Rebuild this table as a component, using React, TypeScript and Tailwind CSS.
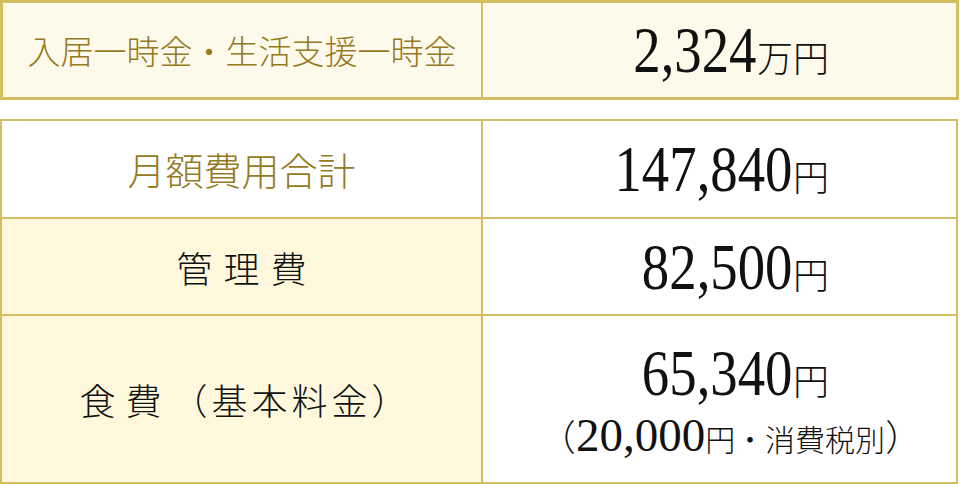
import React from "react";

// 入居一時金・月額費用の料金表（2 ブロック構成）

const BORDER = "border-[#d4be64]";
const GOLD = "text-[#957a1f]";
const SERIF = "font-['Liberation_Serif',serif]";

function Amount({ value, unit }: { value: string; unit: string }) {
  return (
    <span className="flex items-baseline text-[#111]">
      <span
        className={`inline-block origin-right scale-x-[0.83] ${SERIF} text-[66px] leading-none`}
      >
        {value}
      </span>
      <span className="text-[36px] font-light leading-none">{unit}</span>
    </span>
  );
}

function Row({
  label,
  children,
  labelBg,
  className,
}: {
  label: React.ReactNode;
  children: React.ReactNode;
  labelBg: string;
  className: string;
}) {
  return (
    <div className={`flex ${className}`}>
      <div
        className={`flex w-[479px] shrink-0 items-center justify-center ${labelBg}`}
      >
        {label}
      </div>
      <div
        className={`flex flex-1 items-center justify-end border-l-2 ${BORDER} bg-white pr-[127px]`}
      >
        {children}
      </div>
    </div>
  );
}

export default function App() {
  return (
    <div className="h-[484px] w-[960px] bg-white font-['Noto_Sans_CJK_JP',sans-serif] font-light">
      {/* 一時金 */}
      <div
        className={`flex h-[100px] w-[959px] border-[3px] ${BORDER} bg-[#fdf9eb]`}
      >
        <div
          className={`flex w-[478px] shrink-0 items-center justify-center text-[33px] leading-none ${GOLD}`}
        >
          入居一時金・生活支援一時金
        </div>
        <div
          className={`flex flex-1 items-center justify-end border-l-2 ${BORDER} pr-[127px]`}
        >
          <Amount value="2,324" unit="万円" />
        </div>
      </div>

      {/* 月額費用 */}
      <div className={`mt-[19px] w-[958px] border-2 ${BORDER}`}>
        <Row
          className="h-[96px]"
          labelBg="bg-white"
          label={
            <span className={`text-[38px] leading-none ${GOLD}`}>
              月額費用合計
            </span>
          }
        >
          <Amount value="147,840" unit="円" />
        </Row>

        <Row
          className={`h-[97px] border-t-2 ${BORDER}`}
          labelBg="bg-[#fff8dc]"
          label={
            <span className="pl-[11px] text-[36px] leading-none tracking-[11px] text-[#111]">
              管理費
            </span>
          }
        >
          <Amount value="82,500" unit="円" />
        </Row>

        <div className={`flex h-[168px] border-t-2 ${BORDER}`}>
          <div className="flex w-[479px] shrink-0 items-center justify-center bg-[#fff8dc] pl-[8px] text-[36px] leading-none text-[#111]">
            <span className="tracking-[10px]">食費</span>
            <span className="tracking-[4px]">（基本料金）</span>
          </div>
          <div
            className={`flex flex-1 flex-col justify-center gap-[6px] border-l-2 ${BORDER} bg-white`}
          >
            <div className="flex justify-end pr-[127px]">
              <Amount value="65,340" unit="円" />
            </div>
            <div className="flex items-baseline justify-center pl-[22px] leading-none text-[#111]">
              <span className="text-[36px]">（</span>
              <span className={`${SERIF} text-[47px]`}>20,000</span>
              <span className="text-[30px]">円・消費税別</span>
              <span className="text-[36px]">）</span>
            </div>
          </div>
        </div>
      </div>
    </div>
  );
}
